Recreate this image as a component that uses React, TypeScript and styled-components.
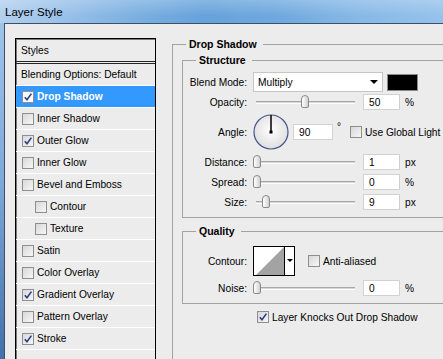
import React from "react";
import styled, { createGlobalStyle } from "styled-components";

const font = `"Liberation Sans", Arial, sans-serif`;

const GlobalStyle = createGlobalStyle`
  html, body {
    margin: 0;
    background: #ececec;
  }
  body {
    font-family: ${font};
    font-size: 10.2px;
    color: #000;
  }
  * {
    box-sizing: border-box;
  }
`;

const Window = styled.div`
  width: 443px;
  height: 359px;
  overflow: hidden;
  display: flex;
  flex-direction: column;
  background: linear-gradient(180deg, #a3c7ec 0%, #7ea9da 50%, #4270aa 100%);
`;

const TitleBar = styled.div`
  height: 23px;
  flex-shrink: 0;
  display: flex;
  align-items: center;
  padding-left: 5px;
  font-size: 11.5px;
  color: #000;
  background:
    linear-gradient(180deg, rgba(255, 255, 255, 0.22), rgba(255, 255, 255, 0) 70%),
    linear-gradient(90deg, #b2cfee 0%, #9dc3ea 12%, #7cb0e1 30%, #66a2db 46%, #6ea8de 62%, #86b8e6 80%, #95c2eb 100%);
`;

const Frame = styled.div`
  flex: 1;
  display: flex;
  padding-left: 4px;
  min-height: 0;
`;

const Content = styled.div`
  flex: 1;
  display: flex;
  align-items: flex-start;
  gap: 16px;
  padding: 14px 0 0 10px;
  background: #ececec;
  border-left: 1px solid #3c5068;
  border-top: 1px solid #3c5068;
  overflow: hidden;
`;

/* ---------- left styles list ---------- */

const StylesPanel = styled.div`
  width: 141px;
  min-height: 330px;
  flex-shrink: 0;
  border: 1px solid #000;
  box-shadow: inset 1px 1px 0 #7a7a7a;
`;

const PanelHeader = styled.div`
  height: 25px;
  display: flex;
  align-items: center;
  padding-left: 5px;
  border-bottom: 3px double #262626;
`;

const StyleRow = styled.div<{ $indent: number; $selected?: boolean }>`
  height: 22px;
  display: flex;
  align-items: center;
  gap: 3px;
  padding-left: ${(p) => p.$indent}px;
  border-bottom: 1px solid #fff;
  background: ${(p) => (p.$selected ? "#3399ff" : "transparent")};
  color: ${(p) => (p.$selected ? "#fff" : "#000")};
  font-weight: ${(p) => (p.$selected ? "bold" : "normal")};
`;

/* ---------- checkbox ---------- */

const Box = styled.span<{ $light?: boolean }>`
  width: 12px;
  height: 12px;
  flex-shrink: 0;
  display: inline-flex;
  border: 1px solid #8e8f8f;
  background: ${(p) =>
    p.$light
      ? "linear-gradient(135deg, #f4f4f4, #ffffff)"
      : "linear-gradient(135deg, #d8d8d8, #f6f6f6)"};
  svg {
    display: block;
  }
`;

function Check({ on, light }: { on?: boolean; light?: boolean }) {
  return (
    <Box $light={light}>
      {on && (
        <svg width="10" height="10" viewBox="0 0 10 10">
          <path d="M1.8 5.2 L4 7.8 L8.4 1.6" fill="none" stroke="#2c3d82" strokeWidth="1.6" />
        </svg>
      )}
    </Box>
  );
}

/* ---------- right side groups ---------- */

const Group = styled.fieldset<{ $width?: number }>`
  margin: 0;
  padding: 0;
  border: 1px solid #a2a2a2;
  min-width: 0;
  ${(p) => (p.$width ? `width: ${p.$width}px;` : "")}
`;

const OuterGroup = styled(Group)`
  margin-top: -1px;
  min-height: 340px;
  flex-shrink: 0;
`;

const InnerGroup = styled(Group)<{ $top: number }>`
  margin: ${(p) => p.$top}px 10px 0 9px;
`;

const Legend = styled.legend`
  margin-left: 13px;
  padding: 0 6px 0 3px;
  font-weight: bold;
  font-size: 10.5px;
  line-height: 14px;
`;

const Rows = styled.div<{ $top: number; $bottom: number }>`
  padding: ${(p) => p.$top}px 0 ${(p) => p.$bottom}px 0;
  display: flex;
  flex-direction: column;
`;

const Row = styled.div<{ $h: number; $mt?: number }>`
  height: ${(p) => p.$h}px;
  margin-top: ${(p) => p.$mt ?? 0}px;
  display: flex;
  align-items: center;
`;

const Label = styled.span`
  width: 64px;
  margin-right: 6px;
  text-align: right;
  flex-shrink: 0;
`;

const Select = styled.div`
  width: 130px;
  height: 20px;
  display: flex;
  align-items: center;
  justify-content: space-between;
  padding: 0 4px 0 4px;
  background: #fff;
  border: 1px solid #c6c6c6;
`;

const Caret = styled.span`
  width: 0;
  height: 0;
  border-left: 4px solid transparent;
  border-right: 4px solid transparent;
  border-top: 4px solid #000;
`;

const Swatch = styled.span`
  width: 31px;
  height: 17px;
  margin-left: 4px;
  background: #000;
  border: 1px solid #8a8a8a;
`;

const SliderWrap = styled.div`
  position: relative;
  width: 102px;
  height: 14px;
  flex-shrink: 0;
`;

const Track = styled.span`
  position: absolute;
  left: 3px;
  right: 0;
  top: 6px;
  height: 3px;
  border-top: 1px solid #a8a8a8;
  border-bottom: 1px solid #fff;
  background: #d6d6d6;
`;

const Thumb = styled.span`
  position: absolute;
  top: 0;
  width: 8px;
  height: 13px;
  border: 1px solid #8a8a8a;
  border-radius: 4px 4px 2px 2px;
  background: linear-gradient(90deg, #ffffff, #e4e4e4 60%, #cfcfcf);
`;

function Slider({ pos }: { pos: number }) {
  return (
    <SliderWrap>
      <Track />
      <Thumb style={{ left: pos }} />
    </SliderWrap>
  );
}

const NumField = styled.span<{ $w?: number; $ml?: number }>`
  width: ${(p) => p.$w ?? 37}px;
  height: 16px;
  margin-left: ${(p) => p.$ml ?? 8}px;
  padding-left: 5px;
  display: flex;
  align-items: center;
  background: #fff;
  border: 1px solid #d2d2d2;
  flex-shrink: 0;
`;

const Unit = styled.span`
  margin-left: 5px;
`;

const Degree = styled.span`
  margin-left: 4px;
  align-self: flex-start;
  margin-top: 9px;
  font-size: 10px;
`;

const CheckLabel = styled.label<{ $ml: number }>`
  display: flex;
  align-items: center;
  gap: 3px;
  margin-left: ${(p) => p.$ml}px;
`;

const ContourBox = styled.div`
  width: 42px;
  height: 30px;
  display: flex;
  border: 1px solid #000;
  background: #fff;
  svg {
    display: block;
  }
`;

const ContourArrow = styled.span`
  width: 10px;
  display: flex;
  align-items: center;
  justify-content: center;
  border-left: 1px solid #000;
  padding-bottom: 2px;
`;

const SmallCaret = styled(Caret)`
  border-left-width: 3px;
  border-right-width: 3px;
  border-top-width: 3px;
`;

function Dial() {
  return (
    <svg width="36" height="36" viewBox="0 0 36 36">
      <defs>
        <radialGradient id="dialFill" cx="50%" cy="45%" r="55%">
          <stop offset="0%" stopColor="#ffffff" />
          <stop offset="100%" stopColor="#dedede" />
        </radialGradient>
      </defs>
      <circle cx="18" cy="18" r="17" fill="url(#dialFill)" stroke="#45578a" strokeWidth="1.2" />
      <line x1="18" y1="18" x2="18" y2="1" stroke="#000" strokeWidth="1.5" />
      <rect x="16.5" y="16.5" width="3" height="3" fill="#000" />
    </svg>
  );
}

type StyleItem = { name: string; checked?: boolean; indent?: boolean; selected?: boolean };

const styleItems: StyleItem[] = [
  { name: "Drop Shadow", checked: true, selected: true },
  { name: "Inner Shadow" },
  { name: "Outer Glow", checked: true },
  { name: "Inner Glow" },
  { name: "Bevel and Emboss" },
  { name: "Contour", indent: true },
  { name: "Texture", indent: true },
  { name: "Satin" },
  { name: "Color Overlay" },
  { name: "Gradient Overlay", checked: true },
  { name: "Pattern Overlay" },
  { name: "Stroke", checked: true },
];

export default function App() {
  return (
    <>
      <GlobalStyle />
      <Window>
        <TitleBar>Layer Style</TitleBar>
        <Frame>
          <Content>
            <StylesPanel>
              <PanelHeader>Styles</PanelHeader>
              <StyleRow $indent={5}>Blending Options: Default</StyleRow>
              {styleItems.map((item) => (
                <StyleRow key={item.name} $indent={item.indent ? 19 : 6} $selected={item.selected}>
                  <Check on={item.checked} light={item.selected} />
                  {item.name}
                </StyleRow>
              ))}
              <StyleRow $indent={6} />
            </StylesPanel>

            <OuterGroup $width={290}>
              <Legend>Drop Shadow</Legend>

              <InnerGroup $top={2}>
                <Legend>Structure</Legend>
                <Rows $top={5} $bottom={5}>
                  <Row $h={20}>
                    <Label>Blend Mode:</Label>
                    <Select>
                      Multiply
                      <Caret />
                    </Select>
                    <Swatch />
                  </Row>
                  <Row $h={20}>
                    <Label>Opacity:</Label>
                    <Slider pos={48} />
                    <NumField>50</NumField>
                    <Unit>%</Unit>
                  </Row>
                  <Row $h={40}>
                    <Label>Angle:</Label>
                    <Dial />
                    <NumField $w={40} $ml={4}>90</NumField>
                    <Degree>°</Degree>
                    <CheckLabel $ml={9}>
                      <Check />
                      Use Global Light
                    </CheckLabel>
                  </Row>
                  <Row $h={20}>
                    <Label>Distance:</Label>
                    <Slider pos={0} />
                    <NumField>1</NumField>
                    <Unit>px</Unit>
                  </Row>
                  <Row $h={20}>
                    <Label>Spread:</Label>
                    <Slider pos={0} />
                    <NumField>0</NumField>
                    <Unit>%</Unit>
                  </Row>
                  <Row $h={20}>
                    <Label>Size:</Label>
                    <Slider pos={9} />
                    <NumField>9</NumField>
                    <Unit>px</Unit>
                  </Row>
                </Rows>
              </InnerGroup>

              <InnerGroup $top={6}>
                <Legend>Quality</Legend>
                <Rows $top={8} $bottom={5}>
                  <Row $h={30}>
                    <Label>Contour:</Label>
                    <ContourBox>
                      <svg width="30" height="28" viewBox="0 0 30 28">
                        <polygon points="2,28 30,0 30,28" fill="#a3a3a3" />
                      </svg>
                      <ContourArrow>
                        <SmallCaret />
                      </ContourArrow>
                    </ContourBox>
                    <CheckLabel $ml={13}>
                      <Check />
                      Anti-aliased
                    </CheckLabel>
                  </Row>
                  <Row $h={20} $mt={2}>
                    <Label>Noise:</Label>
                    <Slider pos={0} />
                    <NumField>0</NumField>
                    <Unit>%</Unit>
                  </Row>
                </Rows>
              </InnerGroup>

              <Row $h={20} $mt={3}>
                <CheckLabel $ml={84}>
                  <Check on />
                  Layer Knocks Out Drop Shadow
                </CheckLabel>
              </Row>
            </OuterGroup>
          </Content>
        </Frame>
      </Window>
    </>
  );
}
